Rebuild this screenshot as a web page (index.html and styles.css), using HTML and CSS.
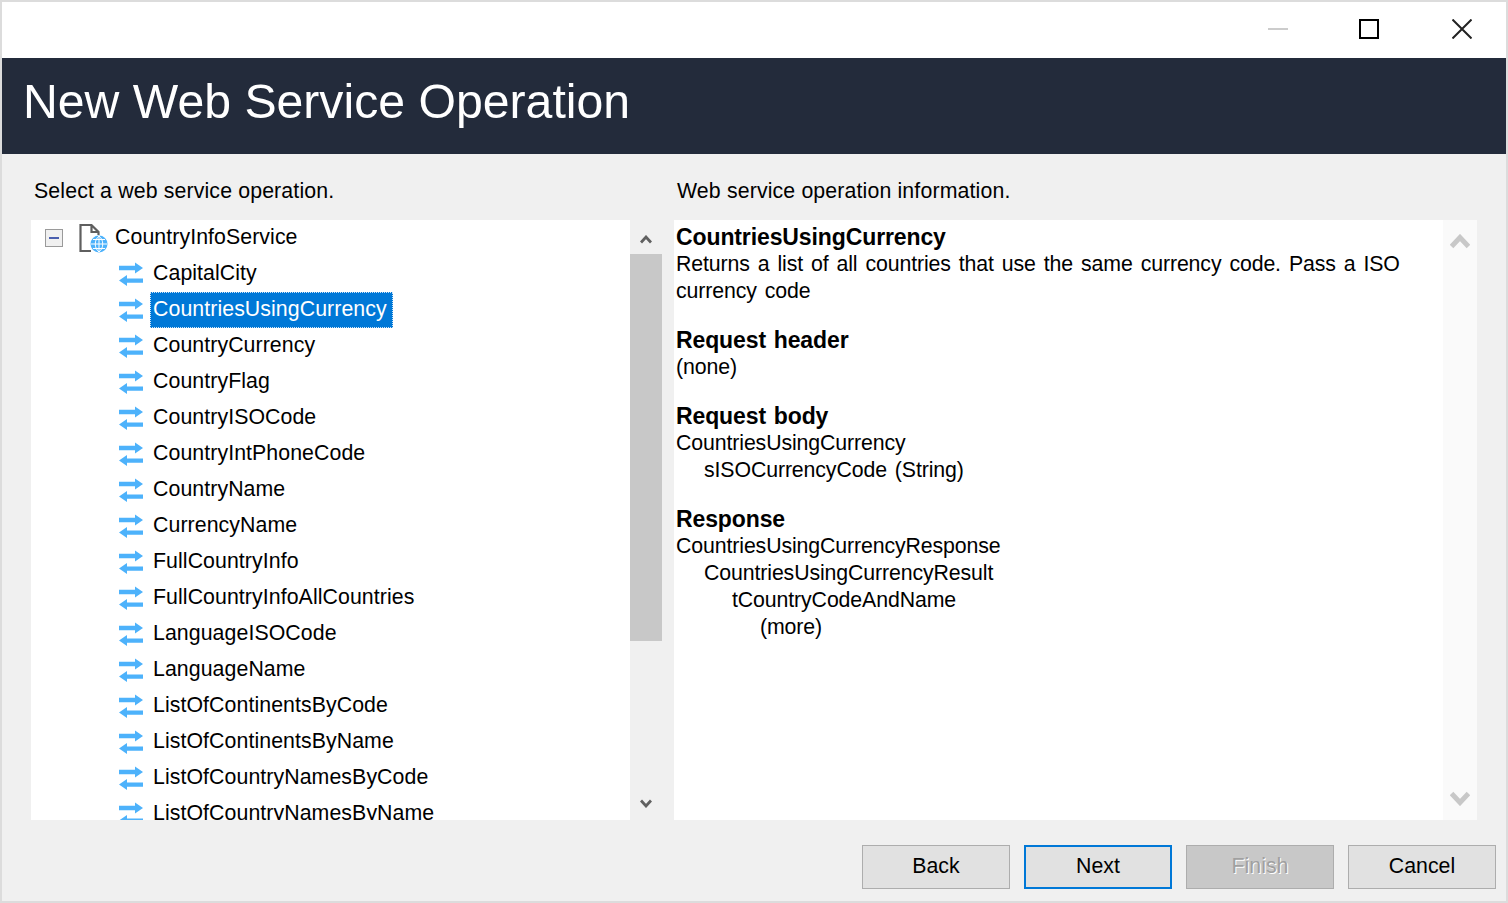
FILE: index.html
```html
<!DOCTYPE html>
<html lang="en">
  <head>
    <meta charset="UTF-8">
    <title>New Web Service Operation</title>
    <link rel="stylesheet" href="styles.css">
  </head>
  <body>
    <svg class="defs" width="0" height="0">
      <symbol id="op" viewBox="0 0 26 24">
        <path d="M1 3.800H17V0.500L25 6L17 11.500V8.200H1Z" fill="#4db2fb"/>
        <path d="M25 16.500H9V13L1 18.500L9 24V20.800H25Z" fill="#4db2fb"/>
      </symbol>
    </svg>
    <div class="window">
      <div class="titlebar">
        <svg class="win-btn" width="20" height="20" viewBox="0 0 20 20"><path d="M0 10H20" stroke="#ccc" stroke-width="2"/></svg>
        <svg class="win-btn" width="20" height="20" viewBox="0 0 20 20"><path d="M1 1H19V19H1Z" fill="none" stroke="#000" stroke-width="2"/></svg>
        <svg class="win-btn win-close" width="20" height="20" viewBox="0 0 20 20"><path d="M0.500 0.500L19.500 19.500M19.500 0.500L0.500 19.500" stroke="#222" stroke-width="2"/></svg>
      </div>
      <div class="banner">New Web Service Operation</div>

      <div class="main">
        <div class="col-left">
          <div class="label label-left">Select a web service operation.</div>
          <div class="tree-wrap">
            <div class="tree">
              <div class="tree-root">
                <span class="expander"><span class="minus"></span></span>
                <svg class="file-icon" width="30" height="30" viewBox="0 0 30 30">
                  <path d="M12 28H1.500V2H12.500L19.500 9V12M12.500 2V9H19.500" fill="none" stroke="#5f5f5f" stroke-width="2.200"/>
                  <circle cx="20" cy="21" r="8.500" fill="#4db2fb"/>
                  <path d="M12 21H28M20 13V29M14 16.500H26M14 25.500H26M20 13C15 17 15 25 20 29C25 25 25 17 20 13Z" fill="none" stroke="#fff" stroke-width="1"/>
                </svg>
                <span class="root-name">CountryInfoService</span>
              </div>
              <div class="op"><svg class="op-icon"><use href="#op"/></svg><span class="op-name">CapitalCity</span></div>
              <div class="op"><svg class="op-icon"><use href="#op"/></svg><span class="op-name selected">CountriesUsingCurrency</span></div>
              <div class="op"><svg class="op-icon"><use href="#op"/></svg><span class="op-name">CountryCurrency</span></div>
              <div class="op"><svg class="op-icon"><use href="#op"/></svg><span class="op-name">CountryFlag</span></div>
              <div class="op"><svg class="op-icon"><use href="#op"/></svg><span class="op-name">CountryISOCode</span></div>
              <div class="op"><svg class="op-icon"><use href="#op"/></svg><span class="op-name">CountryIntPhoneCode</span></div>
              <div class="op"><svg class="op-icon"><use href="#op"/></svg><span class="op-name">CountryName</span></div>
              <div class="op"><svg class="op-icon"><use href="#op"/></svg><span class="op-name">CurrencyName</span></div>
              <div class="op"><svg class="op-icon"><use href="#op"/></svg><span class="op-name">FullCountryInfo</span></div>
              <div class="op"><svg class="op-icon"><use href="#op"/></svg><span class="op-name">FullCountryInfoAllCountries</span></div>
              <div class="op"><svg class="op-icon"><use href="#op"/></svg><span class="op-name">LanguageISOCode</span></div>
              <div class="op"><svg class="op-icon"><use href="#op"/></svg><span class="op-name">LanguageName</span></div>
              <div class="op"><svg class="op-icon"><use href="#op"/></svg><span class="op-name">ListOfContinentsByCode</span></div>
              <div class="op"><svg class="op-icon"><use href="#op"/></svg><span class="op-name">ListOfContinentsByName</span></div>
              <div class="op"><svg class="op-icon"><use href="#op"/></svg><span class="op-name">ListOfCountryNamesByCode</span></div>
              <div class="op"><svg class="op-icon"><use href="#op"/></svg><span class="op-name">ListOfCountryNamesByName</span></div>
            </div>
            <div class="scroll scroll-left">
              <div class="scroll-arrow">
                <svg width="12" height="9" viewBox="0 0 12 9"><path d="M1 7.500L6 2L11 7.500" fill="none" stroke="#606060" stroke-width="2.800"/></svg>
              </div>
              <div class="thumb"></div>
              <div class="scroll-rest">
                <svg width="12" height="9" viewBox="0 0 12 9"><path d="M1 1.500L6 7L11 1.500" fill="none" stroke="#606060" stroke-width="2.800"/></svg>
              </div>
            </div>
          </div>
        </div>

        <div class="col-right">
          <div class="label">Web service operation information.</div>
          <div class="info-wrap">
            <div class="info">
              <div class="block">
                <div class="info-head">CountriesUsingCurrency</div>
                <div>Returns a list of all countries that use the same currency code. Pass a ISO currency code</div>
              </div>
              <div class="block">
                <div class="info-head">Request header</div>
                <div>(none)</div>
              </div>
              <div class="block">
                <div class="info-head">Request body</div>
                <div>CountriesUsingCurrency</div>
                <div class="indent-1">sISOCurrencyCode (String)</div>
              </div>
              <div class="block">
                <div class="info-head">Response</div>
                <div>CountriesUsingCurrencyResponse</div>
                <div class="indent-1">CountriesUsingCurrencyResult</div>
                <div class="indent-2">tCountryCodeAndName</div>
                <div class="indent-3">(more)</div>
              </div>
            </div>
            <div class="scroll-right">
              <svg width="20" height="15" viewBox="0 0 20 15"><path d="M1.500 12.500L10 3.500L18.500 12.500" fill="none" stroke="#c8c8c8" stroke-width="5"/></svg>
              <svg width="20" height="15" viewBox="0 0 20 15"><path d="M1.500 2.500L10 11.500L18.500 2.500" fill="none" stroke="#c8c8c8" stroke-width="5"/></svg>
            </div>
          </div>
        </div>
      </div>

      <div class="buttons">
        <button class="btn">Back</button>
        <button class="btn btn-default">Next</button>
        <button class="btn btn-disabled">Finish</button>
        <button class="btn">Cancel</button>
      </div>
    </div>
  </body>
</html>
```

FILE: styles.css
```css
html, body {
  margin: 0;
  height: 100%;
}

body {
  font-family: "Liberation Sans", Arial, sans-serif;
  font-size: 21.300px;
  color: #000;
  background: #f0f0f0;
  overflow: hidden;
}

.defs {
  position: absolute;
}

.window {
  box-sizing: border-box;
  width: 1508px;
  height: 903px;
  border: 2px solid #dcdcdc;
  background: #f0f0f0;
  display: flex;
  flex-direction: column;
}

.titlebar {
  height: 56px;
  background: #fff;
  display: flex;
  align-items: center;
  justify-content: flex-end;
  gap: 71px;
  padding: 0 34px 2px 0;
  box-sizing: border-box;
}

.win-btn {
  display: block;
}

.win-close {
  margin-left: 2px;
}

.banner {
  height: 96px;
  background: #232b3b;
  color: #fff;
  font-size: 48.200px;
  line-height: 86px;
  padding-left: 21px;
}

.main {
  display: flex;
  padding-left: 29px;
  height: 666px;
}

.col-left {
  width: 643px;
}

.col-right {
  width: 803px;
}

.label {
  height: 66px;
  line-height: 74px;
  padding-left: 3px;
  letter-spacing: 0.140px;
}

.tree-wrap {
  display: flex;
  height: 600px;
}

.tree {
  width: 599px;
  height: 600px;
  background: #fff;
  overflow: hidden;
  letter-spacing: 0.080px;
}

.tree-root {
  height: 36px;
  display: flex;
  align-items: center;
  padding-left: 14px;
}

.root-name {
  line-height: 34px;
  padding-bottom: 2px;
}

.expander {
  box-sizing: border-box;
  width: 18px;
  height: 18px;
  border: 1px solid #9a9a9a;
  background: #f0f0f0;
  display: flex;
  align-items: center;
  justify-content: center;
  margin-right: 16px;
}

.minus {
  width: 10px;
  height: 2px;
  background: #4a5fae;
}

.file-icon {
  margin-right: 6px;
  flex: none;
}

.op {
  height: 36px;
  display: flex;
  align-items: center;
  padding-left: 87px;
}

.op-icon {
  width: 26px;
  height: 24px;
  margin-right: 6px;
  flex: none;
}

.op-name {
  line-height: 34px;
  padding: 0 3px 2px;
}

.selected {
  background: #0078d7;
  color: #fff;
  padding-right: 6px;
  outline: 1px dotted #cfe4f7;
  outline-offset: -1px;
}

.scroll-left {
  width: 32px;
  display: flex;
  flex-direction: column;
}

.scroll-arrow {
  height: 34px;
  display: flex;
  align-items: center;
  justify-content: center;
  box-sizing: border-box;
  padding-top: 4px;
}

.thumb {
  height: 387px;
  background: #c8c8c8;
}

.scroll-rest {
  flex: 1;
  display: flex;
  align-items: flex-end;
  justify-content: center;
  padding-bottom: 12px;
}

.info-wrap {
  display: flex;
  height: 600px;
  background: #fff;
}

.info {
  width: 769px;
  box-sizing: border-box;
  padding: 3px 30px 0 2px;
  line-height: 27px;
  letter-spacing: -0.110px;
  word-spacing: 2.150px;
}

.block {
  margin-bottom: 21px;
}

.info-head {
  font-weight: bold;
  font-size: 23px;
  line-height: 28px;
  word-spacing: 1.500px;
}

.indent-1 {
  padding-left: 28px;
}

.indent-2 {
  padding-left: 56px;
}

.indent-3 {
  padding-left: 84px;
}

.scroll-right {
  width: 34px;
  background: #fafafa;
  display: flex;
  flex-direction: column;
  justify-content: space-between;
  align-items: center;
  padding: 14px 0;
  box-sizing: border-box;
}

.buttons {
  display: flex;
  justify-content: flex-end;
  gap: 14px;
  padding: 25px 10px 0 0;
}

.btn {
  box-sizing: border-box;
  width: 148px;
  height: 44px;
  font-family: inherit;
  font-size: 21.300px;
  color: #000;
  background: #e1e1e1;
  border: 1px solid #adadad;
  padding: 0 0 2px;
}

.btn-default {
  border: 2px solid #0078d7;
}

.btn-disabled {
  background: #c8c8c8;
  color: #a0a0a0;
  text-shadow: 1px 1px 0 #fff;
}
```
